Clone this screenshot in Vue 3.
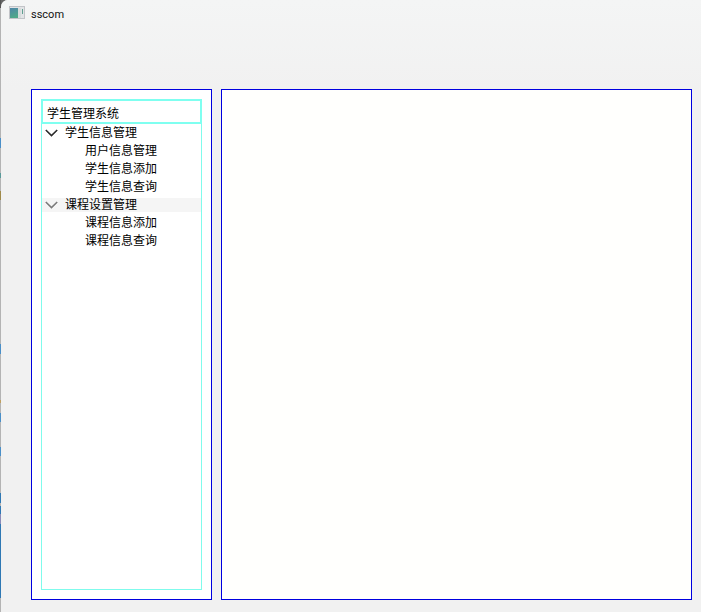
<script setup>
const groups = [
  { name: '学生信息管理', dim: false, items: ['用户信息管理', '学生信息添加', '学生信息查询'] },
  { name: '课程设置管理', dim: true, items: ['课程信息添加', '课程信息查询'] },
]
const edge = [
  [8, '#555555'], [130, '#b4b4b4'], [10, '#4a8fc8'], [25, '#b4b4b4'], [5, '#5a9a9a'], [13, '#b4b4b4'],
  [9, '#a08a4a'], [144, '#b4b4b4'], [10, '#4a8fc8'], [46, '#b4b4b4'], [3, '#c0a060'], [10, '#b4b4b4'],
  [9, '#4a8fc8'], [25, '#b4b4b4'], [9, '#4a8fc8'], [37, '#b4b4b4'], [10, '#2f78b4'], [3, '#b4b4b4'],
  [8, '#2f78b4'], [10, '#8a8ab8'], [74, '#2f78b4'], [14, '#b4b4b4'],
]
</script>

<template>
  <div class="window">
    <div class="edge">
      <i v-for="(s, n) in edge" :key="n" :style="{ height: s[0] + 'px', background: s[1] }"></i>
    </div>
    <div class="body">
      <header class="titlebar">
        <svg class="app-icon" width="16" height="13" viewBox="0 0 16 13">
          <defs>
            <linearGradient id="scr" x1="0" y1="0" x2="0.3" y2="1">
              <stop offset="0" stop-color="#4f86a8" />
              <stop offset="1" stop-color="#4fa88a" />
            </linearGradient>
          </defs>
          <rect x="0.5" y="0.5" width="15" height="12" fill="#e2e4e6" stroke="#c2c4c8" />
          <rect x="1" y="2" width="8" height="10" fill="url(#scr)" />
          <rect x="9" y="2" width="3" height="10" fill="#d6dcdc" />
          <rect x="13" y="3" width="1" height="5" fill="#5fa090" />
        </svg>
        <span class="title">sscom</span>
      </header>
      <main class="content">
        <aside class="side">
          <div class="tree">
            <div class="tree-head">学生管理系统</div>
            <template v-for="g in groups" :key="g.name">
              <div class="row group" :class="{ hover: g.dim }">
                <svg class="chev" width="13" height="8" viewBox="0 0 13 8">
                  <path d="M0.8 1 L6.5 6.6 L12.2 1" fill="none" stroke-width="1.6" :stroke="g.dim ? '#7a7a7a' : '#2a2a2a'" />
                </svg>
                <span class="label">{{ g.name }}</span>
              </div>
              <div v-for="i in g.items" :key="i" class="row item">{{ i }}</div>
            </template>
          </div>
        </aside>
        <section class="pane"></section>
      </main>
    </div>
  </div>
</template>

<style scoped>
.window {
  width: 701px;
  height: 612px;
  display: flex;
  background: #666;
  font-family: "Noto Sans CJK SC", "Liberation Sans", sans-serif;
  color: #000;
  overflow: hidden;
}
.edge {
  width: 1px;
  flex: none;
  display: flex;
  flex-direction: column;
}
.edge i {
  display: block;
  flex: none;
}
.body {
  flex: 1;
  min-width: 0;
  background: #f1f1f1;
  border-top-left-radius: 7px;
  overflow: hidden;
}
.titlebar {
  height: 89px;
  box-sizing: border-box;
  padding: 6px 0 0 8px;
  display: flex;
  align-items: flex-start;
  gap: 6px;
  background: linear-gradient(#f4f5f5, #f1f1f1);
}
.title {
  margin-top: 1px;
  font-family: Roboto, "Liberation Sans", sans-serif;
  font-size: 11px;
  line-height: 15px;
  color: #111;
}
.content {
  display: flex;
  gap: 9px;
  padding-left: 30px;
  height: 511px;
}
.side {
  width: 181px;
  box-sizing: border-box;
  border: 1px solid #0000e0;
  background: #fff;
  padding: 9px;
}
.tree {
  height: 100%;
  box-sizing: border-box;
  border: 1px solid #7ffbec;
  border-top: 0;
}
.tree-head {
  margin: 0 -1px;
  height: 25px;
  box-sizing: border-box;
  border: 2px solid #7ffff0;
  padding-left: 4px;
  font-size: 12px;
  line-height: 23px;
}
.row {
  height: 18px;
  font-size: 12px;
  line-height: 16px;
}
.group {
  display: flex;
  align-items: center;
  padding-left: 3px;
}
.group.hover {
  background: linear-gradient(#f5f5f5, #f5f5f5) no-repeat 0 2px / 100% 14px;
}
.chev {
  margin-right: 7px;
  flex: none;
}
.label {
  height: 16px;
  align-self: flex-start;
}
.item {
  padding-left: 43px;
}
.pane {
  width: 471px;
  box-sizing: border-box;
  border: 1px solid #0000e0;
  background: #fffffd;
}
</style>
